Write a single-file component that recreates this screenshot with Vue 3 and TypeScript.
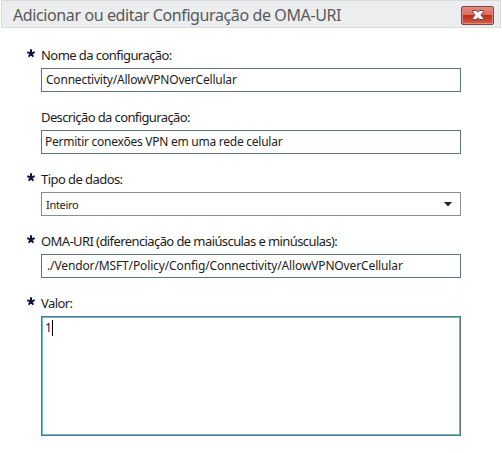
<script setup lang="ts">
interface Field {
  id: string
  label: string
  value: string
  required: boolean
  kind: 'text' | 'select' | 'area'
}

const fields: Field[] = [
  { id: 'name', label: 'Nome da configuração:', value: 'Connectivity/AllowVPNOverCellular', required: true, kind: 'text' },
  { id: 'description', label: 'Descrição da configuração:', value: 'Permitir conexões VPN em uma rede celular', required: false, kind: 'text' },
  { id: 'type', label: 'Tipo de dados:', value: 'Inteiro', required: true, kind: 'select' },
  { id: 'uri', label: 'OMA-URI (diferenciação de maiúsculas e minúsculas):', value: './Vendor/MSFT/Policy/Config/Connectivity/AllowVPNOverCellular', required: true, kind: 'text' },
  { id: 'value', label: 'Valor:', value: '1', required: true, kind: 'area' },
]
</script>

<template>
  <div class="dialog">
    <header class="titlebar">
      <h1 class="title"><span>Adicionar ou editar Configuração de OMA-URI</span></h1>
      <button class="close" aria-label="Fechar">
        <svg width="12" height="10" viewBox="0 0 12 10">
          <path d="M.5.5h3.700L6 2.300 7.800.5h3.700v1.300L8.900 5l2.600 3.200v1.300H7.800L6 7.700 4.200 9.500H.5V8.200L3.100 5 .5 1.800z" fill="#fff" stroke="#70494f" stroke-width="1" />
        </svg>
      </button>
    </header>
    <main class="form">
      <div v-for="f in fields" :key="f.id" class="row" :class="f.id">
        <svg v-if="f.required" class="star" width="8" height="9" viewBox="0 0 8 9">
          <path d="M4 4.400V.3M4 4.400.3 3.200M4 4.400 7.700 3.200M4 4.400 1.700 7.800M4 4.400l2.300 3.400" stroke="#14123a" stroke-width="2" fill="none" />
        </svg>
        <div class="label"><span>{{ f.label }}</span></div>
        <div class="field" :class="f.kind">
          <span class="text">{{ f.value }}</span>
          <i v-if="f.kind === 'area'" class="caret"></i>
          <svg v-if="f.kind === 'select'" class="arrow" width="8" height="5" viewBox="0 0 8 5">
            <path d="M0 0h8L4 4.500z" fill="#222" />
          </svg>
        </div>
      </div>
    </main>
  </div>
</template>

<style>
body {
  margin: 0;
  background: #fff;
}
</style>

<style scoped>
.dialog {
  width: 502px;
  height: 453px;
  overflow: hidden;
  font-family: "Noto Sans", "Open Sans", sans-serif;
  color: #1c1c1c;
}
.titlebar {
  box-sizing: border-box;
  width: 500px;
  height: 28px;
  margin-left: 1px;
  padding: 0 6px 0 11px;
  display: flex;
  align-items: center;
  justify-content: space-between;
  background: #ecedef;
  border: 1px solid #d9dadb;
}
.title {
  margin: 0;
  padding-top: 1px;
  font-size: 16px;
  line-height: 26px;
  font-weight: 400;
  color: #595959;
  white-space: nowrap;
  letter-spacing: -0.39px;
}
.close {
  box-sizing: border-box;
  width: 33px;
  height: 19px;
  padding: 0;
  margin-top: 2px;
  display: flex;
  align-items: center;
  justify-content: center;
  border: 1px solid #7c4548;
  border-radius: 2px;
  box-shadow: inset 0 0 0 1px #e08d80;
  background: linear-gradient(#e78a7c 0, #dc6b5a 46%, #bd2f1c 50%, #c9402b 75%, #d5654f 100%);
}
.form {
  padding: 20px 0 0 41px;
}
.row {
  display: grid;
  grid-template-rows: 20px 24px;
  width: 420px;
  height: 62px;
  position: relative;
}
.star {
  position: absolute;
  left: -14px;
  top: 1px;
}
.label {
  font-size: 13px;
  line-height: 15px;
  white-space: nowrap;
  letter-spacing: -0.56px;
}
.description .label {
  letter-spacing: -0.61px;
}
.uri .label {
  letter-spacing: -0.59px;
}
.field {
  box-sizing: border-box;
  width: 420px;
  height: 24px;
  padding: 0 8px 0 4px;
  display: flex;
  align-items: center;
  border: 1px solid #5f7283;
  background: #fff;
  font-size: 12px;
  line-height: 22px;
  white-space: nowrap;
}
.name .text {
  letter-spacing: -0.21px;
}
.description .field {
  padding-left: 3px;
}
.description .text {
  letter-spacing: -0.25px;
}
.uri .field {
  padding-left: 5px;
}
.uri .text {
  letter-spacing: -0.13px;
}
.select {
  border-color: #8b8d8f;
  justify-content: space-between;
}
.select .text {
  padding-top: 2px;
  font-size: 11px;
  letter-spacing: -0.3px;
}
.area {
  height: 120px;
  align-items: flex-start;
  padding: 0 3px;
  box-shadow: inset 0 0 0 1px #65bdd0;
}
.caret {
  width: 1px;
  height: 16px;
  margin-top: 3px;
  background: #000;
}
</style>
